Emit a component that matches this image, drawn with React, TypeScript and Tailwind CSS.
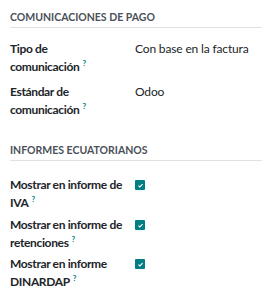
const font = { fontFamily: 'Lato, "Open Sans", sans-serif' };

function Help() {
  return (
    <span className="relative -top-[5px] ml-[3px] inline-block text-[8px] font-bold leading-none text-[#017e84]">
      ?
    </span>
  );
}

function Section({ title, gap }: { title: string; gap: string }) {
  return (
    <div className={`border-b border-[#dee2e6] pb-[3px] ${gap}`}>
      <h3 className="text-[10.5px] font-bold uppercase leading-[14px] text-[#4b5059]">{title}</h3>
    </div>
  );
}

function Row({
  label,
  children,
  gap = "mb-[6px]",
}: {
  label: [string, string];
  children: React.ReactNode;
  gap?: string;
}) {
  return (
    <div className={`flex ${gap}`}>
      <div className="w-[125px] shrink-0 whitespace-nowrap text-[12px] font-bold leading-[18px] tracking-[-0.35px] text-[#212529]">
        {label[0]}
        <br />
        {label[1]}
        <Help />
      </div>
      <div className="whitespace-nowrap text-[12px] leading-[18px] tracking-[-0.15px] text-[#212529]">{children}</div>
    </div>
  );
}

function Check() {
  return (
    <span className="mt-[4px] flex h-[10px] w-[10px] items-center justify-center rounded-[1px] bg-[#017e84]">
      <svg viewBox="0 0 10 10" className="h-[7px] w-[7px]">
        <path d="M2 5.2 L4 7 L8 3" fill="none" stroke="white" strokeWidth="1.6" />
      </svg>
    </span>
  );
}

export default function App() {
  return (
    <div className="min-h-[302px] w-[262px] bg-white pl-[10px] pt-[10px]" style={font}>
      <Section title="Comunicaciones de pago" gap="mb-[12px]" />
      <Row label={["Tipo de", "comunicación"]} gap="mb-[7px]">
        Con base en la factura
      </Row>
      <Row label={["Estándar de", "comunicación"]}>Odoo</Row>
      <div className="h-[18px]" />
      <Section title="Informes ecuatorianos" gap="mb-[15px]" />
      <Row label={["Mostrar en informe de", "IVA"]} gap="mb-[4px]">
        <Check />
      </Row>
      <Row label={["Mostrar en informe de", "retenciones"]} gap="mb-[3px]">
        <Check />
      </Row>
      <Row label={["Mostrar en informe", "DINARDAP"]}>
        <Check />
      </Row>
    </div>
  );
}
